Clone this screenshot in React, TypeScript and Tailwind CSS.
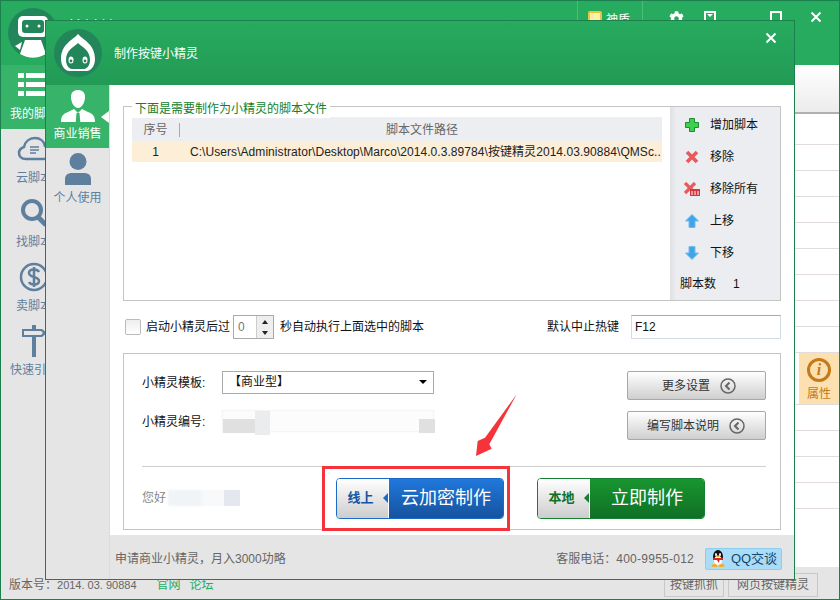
import { FaCog } from "react-icons/fa"

const font = "font-['Liberation_Sans','Noto_Sans_CJK_SC',sans-serif]"
const rowLines = [31, 26, 26, 26, 26, 26, 26, 26, 26, 52, 26, 26, 26, 26]

function RobotLogo() {
  return (
    <svg width="50" height="50" viewBox="0 0 50 50">
      <circle cx="25" cy="25" r="25" fill="#23855a" />
      <rect x="10" y="8" width="30" height="21" rx="5" fill="#fff" />
      <rect x="14" y="12" width="22" height="13" rx="3" fill="#23855a" />
      <circle cx="19" cy="18" r="1.500" fill="#fff" />
      <circle cx="31" cy="18" r="1.500" fill="#fff" />
      <path d="M17 32h16l5 14a25 25 0 0 1-26 0z" fill="#fff" />
      <path d="M7 38l7-4-2 8z" fill="#fff" />
    </svg>
  )
}

function SpriteLogo() {
  return (
    <svg width="48" height="48" viewBox="0 0 48 48">
      <circle cx="24" cy="24" r="24" fill="#23855a" />
      <path d="M24 5C19 11 7 15 7 30c0 8 5 12 8 12h18c3 0 8-4 8-12C41 15 29 11 24 5z" fill="#fff" />
      <path d="M24 14c-4 4-12 7-12 17 0 5 3 9 6 9h12c3 0 6-4 6-9 0-10-8-13-12-17z" fill="#23855a" />
      <ellipse cx="17" cy="31" rx="2.500" ry="3.500" fill="#fff" />
      <ellipse cx="31" cy="31" rx="2.500" ry="3.500" fill="#fff" />
      <circle cx="17" cy="32" r="1.400" fill="#23855a" />
      <circle cx="31" cy="32" r="1.400" fill="#23855a" />
    </svg>
  )
}

function ListIcon() {
  return (
    <svg width="32" height="24" viewBox="0 0 32 24" fill="#fff">
      <rect x="0" y="0" width="6" height="5" />
      <rect x="8" y="0" width="24" height="5" />
      <rect x="0" y="9" width="6" height="5" />
      <rect x="8" y="9" width="24" height="5" />
      <rect x="0" y="18" width="6" height="5" />
      <rect x="8" y="18" width="24" height="5" />
    </svg>
  )
}

function CloudIcon() {
  return (
    <svg width="34" height="26" viewBox="0 0 34 26" fill="none" stroke="#5f7f9f" strokeWidth="2.500">
      <path d="M9 23C4 23 2 20 2 17c0-3 2-5 5-6 1-5 5-9 11-9 5 0 9 3 10 8 3 1 5 3 5 7 0 3-3 6-6 6z" />
      <path d="M13 11h9M13 14h9M13 17h6" strokeWidth="1.500" />
    </svg>
  )
}

function SearchIcon() {
  return (
    <svg width="28" height="30" viewBox="0 0 28 30" fill="none" stroke="#5f7f9f">
      <circle cx="12" cy="12" r="9" strokeWidth="4" />
      <path d="M18 19l8 8" strokeWidth="5" />
    </svg>
  )
}

function DollarIcon() {
  return (
    <svg width="30" height="30" viewBox="0 0 30 30" fill="none" stroke="#5f7f9f">
      <circle cx="15" cy="15" r="13" strokeWidth="2.500" />
      <path d="M20 10c-1-2-3-2.500-5-2.500-3 0-5 1.500-5 3.500 0 5 10 3 10 8 0 2-2 3.500-5 3.500-2 0-4-.5-5-2.500M15 5v20" strokeWidth="2.500" />
    </svg>
  )
}

function SignIcon() {
  return (
    <svg width="26" height="32" viewBox="0 0 26 32" fill="#5f7f9f">
      <rect x="11" y="0" width="4" height="32" />
      <path d="M1 4h20l5 4-5 4H1z" />
      <path d="M3 6h17l2 2-2 2H3z" fill="#e6e6e6" />
    </svg>
  )
}

function SuitPerson() {
  return (
    <svg width="34" height="32" viewBox="0 0 34 32">
      <path d="M10 7c0-5 3-7 7-7s7 2 7 7c0 5-3 11-7 11s-7-6-7-11z" fill="#fff" />
      <path d="M0 32c0-6 2-8 7-10l6-3 4 4 4-4 6 3c5 2 7 4 7 10z" fill="#fff" />
      <path d="M15.500 23h3l.8 9h-4.600z" fill="#38b46a" />
    </svg>
  )
}

function PlainPerson() {
  return (
    <svg width="26" height="32" viewBox="0 0 26 32" fill="#5f7f9f">
      <circle cx="13" cy="8.500" r="8.500" />
      <path d="M0 32v-6c0-4 3-6 7-6h12c4 0 7 2 7 6v6z" />
    </svg>
  )
}

function PlusIcon() {
  return (
    <svg width="14" height="14" viewBox="0 0 14 14">
      <path d="M4.500.5h5v4h4v5h-4v4h-5v-4h-4v-5h4z" fill="#3ed04c" stroke="#1c8a38" />
    </svg>
  )
}

function CrossIcon() {
  return (
    <svg width="14" height="14" viewBox="0 0 14 14">
      <path d="M2 2l10 10M12 2L2 12" stroke="#e8585c" strokeWidth="3.600" />
    </svg>
  )
}

function CrossAllIcon() {
  return (
    <svg width="16" height="14" viewBox="0 0 16 14">
      <path d="M1 1l10 10M11 1L1 11" stroke="#e8585c" strokeWidth="3.200" />
      <rect x="6" y="7" width="10" height="7" fill="#d8343c" />
      <path d="M8 9v4M11 9v4M14 9v4" stroke="#fff" />
    </svg>
  )
}

function UpIcon({ down }: { down?: boolean }) {
  return (
    <svg width="14" height="14" viewBox="0 0 14 14" className={down ? "rotate-180" : ""}>
      <path d="M7 .5l6.500 6.500H10v6.500H4V7H.5z" fill="#3ba6ea" stroke="#7fb8e6" />
    </svg>
  )
}

function BackCircle() {
  return (
    <svg width="16" height="16" viewBox="0 0 16 16" fill="none" stroke="#666">
      <circle cx="8" cy="8" r="7" strokeWidth="1.500" />
      <path d="M9.500 4.500L6 8l3.500 3.500" strokeWidth="2" />
    </svg>
  )
}

function Penguin() {
  return (
    <svg width="16" height="17" viewBox="0 0 16 17">
      <ellipse cx="8" cy="6.500" rx="5" ry="6.500" fill="#111" />
      <ellipse cx="8" cy="10.500" rx="4" ry="5" fill="#fff" />
      <ellipse cx="6" cy="4.500" rx="1" ry="1.500" fill="#fff" />
      <ellipse cx="10" cy="4.500" rx="1" ry="1.500" fill="#fff" />
      <path d="M3 8h10v2H9.500l-.5 3-2-3H3z" fill="#d8261c" />
      <path d="M6 6h4L8 7.500z" fill="#f2b01c" />
      <ellipse cx="4.500" cy="15.500" rx="3" ry="1.500" fill="#f2b01c" />
      <ellipse cx="11.500" cy="15.500" rx="3" ry="1.500" fill="#f2b01c" />
    </svg>
  )
}

function NavItem({ icon, label, active }: { icon: React.ReactNode; label: string; active?: boolean }) {
  return (
    <div className={`flex h-[64px] w-full flex-col items-center pt-[4px] text-[12px] ${active ? "bg-[#38b46a] text-white" : "text-[#5f7f9f]"}`}>
      <div className="flex h-[32px] items-center">{icon}</div>
      <div className="mt-[4px] whitespace-nowrap">{label}</div>
    </div>
  )
}

function SideTool({ icon, label }: { icon: React.ReactNode; label: string }) {
  return (
    <div className="flex h-[32px] items-center">
      <div className="flex w-[38px] justify-center pl-[6px]">{icon}</div>
      <div className="ml-[2px]">{label}</div>
    </div>
  )
}

function GreyButton({ label, pad }: { label: string; pad: string }) {
  return (
    <div className={`flex h-[29px] w-[139px] items-center rounded-[2px] border border-[#a8a8a8] bg-gradient-to-b from-white to-[#cfcfcf] text-[#333] ${pad}`}>
      <span>{label}</span>
      <span className="ml-[10px]"><BackCircle /></span>
    </div>
  )
}

function MakeButton({ tag, label, border, from, to, tagColor, arrow, ml }: { tag: string; label: string; border: string; from: string; to: string; tagColor: string; arrow: string; ml: string }) {
  return (
    <div className={`flex h-[41px] w-[168px] overflow-hidden rounded-[4px] border ${border} ${ml}`}>
      <div className={`relative flex w-[51px] items-center justify-center bg-gradient-to-b from-white to-[#cdcdcd] pr-[4px] text-[13px] font-bold ${tagColor}`}>
        {tag}
        <span className={`absolute right-0 top-[14px] h-0 w-0 border-y-[5px] border-r-[5px] border-y-transparent ${arrow}`} />
      </div>
      <div className={`flex flex-1 items-center justify-center border-l border-white bg-gradient-to-b text-[18px] text-white ${from} ${to}`}>{label}</div>
    </div>
  )
}

export default function App() {
  return (
    <div className={`relative h-[600px] w-[840px] overflow-hidden text-[12px] ${font}`}>
      {/* main window behind the dialog */}
      <div className="flex h-[600px] flex-col border border-[#1b7f4e] bg-[#e5e5e5]">
        <div className="flex h-[64px] bg-[#27ab5f] text-white">
          <div className="ml-[7px] mt-[7px]"><RobotLogo /></div>
          <div className="ml-[10px] mt-[15px] text-[16px]">按键精灵2014</div>
          <div className="ml-auto flex h-[40px]">
            <div className="flex w-[66px] items-start gap-[4px] border-x border-[#4cbc7c] pl-[10px] pt-[10px]">
              <span className="h-[14px] w-[14px] rounded-[2px] border-2 border-[#e8c53a] bg-[#fff2a8]" />
              <span>神盾</span>
            </div>
            <div className="flex items-start pl-[26px] pt-[10px]">
              <FaCog size={15} />
              <span className="ml-[20px] flex h-[13px] w-[12px] justify-center border-[2px] border-white pt-[1px]">
                <span className="h-0 w-0 border-x-[3px] border-t-[3px] border-x-transparent border-t-white" />
              </span>
              <span className="ml-[21px] mt-[10px] h-[2px] w-[11px] bg-white" />
              <span className="ml-[22px] h-[13px] w-[12px] border-[2px] border-white" />
              <svg className="ml-[28px] mr-[17px]" width="12" height="12" viewBox="0 0 12 12" stroke="#fff" strokeWidth="2"><path d="M1.500 1.500l9 9M10.500 1.500l-9 9" /></svg>
            </div>
          </div>
        </div>
        <div className="flex min-h-0 flex-1">
          <div className="flex w-[66px] flex-col items-center">
            <NavItem active icon={<ListIcon />} label="我的脚本" />
            <NavItem icon={<CloudIcon />} label="云脚本" />
            <NavItem icon={<SearchIcon />} label="找脚本" />
            <NavItem icon={<DollarIcon />} label="卖脚本" />
            <NavItem icon={<SignIcon />} label="快速引导" />
          </div>
          <div className="flex flex-1 flex-col bg-white">
            <div className="h-[47px] bg-gradient-to-b from-white to-[#ececec]" />
            <div className="h-[2px] bg-[#b0b0b0]" />
            {rowLines.map((h, i) => (
              <div key={i} style={{ height: h }} className="flex shrink-0 justify-end border-b border-[#e3dcdc]">
                {i === 9 && (
                  <div className="flex h-full w-[40px] flex-col items-center bg-[#fde0b0] pt-[5px] text-[#c47a1a]">
                    <div className="flex h-[24px] w-[24px] items-center justify-center rounded-full border-[3px] border-[#c47a1a] font-['Liberation_Serif',serif] text-[16px] font-bold italic">i</div>
                    <div className="mt-[3px]">属性</div>
                  </div>
                )}
              </div>
            ))}
          </div>
        </div>
        <div className="flex h-[32px] shrink-0 items-center bg-[#e5e5e5] pl-[8px] pt-[3px] text-[#666]">
          <span>版本号：<span className="text-[11px]">2014. 03. 90884</span></span>
          <span className="ml-[20px] text-[#27ab5f]">官网</span>
          <span className="ml-[9px] text-[#27ab5f]">论坛</span>
          <span className="ml-auto flex h-[24px] w-[60px] items-center justify-center border border-[#c8c8c8]">按键抓抓</span>
          <span className="ml-[4px] mr-[21px] flex h-[24px] w-[90px] items-center justify-center border border-[#c8c8c8]">网页按键精灵</span>
        </div>
      </div>

      {/* dialog */}
      <div className="absolute left-[45px] top-[20px] flex h-[560px] w-[750px] flex-col border border-[#1b7f4e] bg-[#e5e5e5]">
        <div className="flex h-[64px] shrink-0 bg-gradient-to-b from-[#27ab5f] to-[#229a55] text-white">
          <div className="ml-[8px] mt-[8px]"><SpriteLogo /></div>
          <div className="ml-[12px] mt-[24px] text-[12px]">制作按键小精灵</div>
          <svg className="ml-auto mr-[17px] mt-[11px]" width="12" height="12" viewBox="0 0 12 12" stroke="#fff" strokeWidth="2"><path d="M1.500 1.500l9 9M10.500 1.500l-9 9" /></svg>
        </div>
        <div className="flex min-h-0 flex-1">
          <div className="flex w-[64px] shrink-0 flex-col border-r border-[#dcdcdc]">
            <div className="relative flex h-[63px] flex-col items-center bg-[#38b46a] pt-[5px] text-white">
              <SuitPerson />
              <div className="mt-[3px] text-[12px]">商业销售</div>
              <span className="absolute right-0 top-[26px] h-0 w-0 border-y-[6px] border-r-[8px] border-y-transparent border-r-white" />
            </div>
            <div className="flex flex-col items-center pt-[5px] text-[#5f7f9f]">
              <PlainPerson />
              <div className="mt-[4px]">个人使用</div>
            </div>
          </div>
          <div className="flex flex-1 flex-col">
            <div className="h-[450px] shrink-0 bg-white px-[13px] pt-[21px] text-[#111]">
              {/* script list box */}
              <div className="relative flex h-[195px] border border-[#c4c4c4]">
                <span className="absolute left-[8px] top-[-7px] bg-white px-[3px] text-[#12802f]">下面是需要制作为小精灵的脚本文件</span>
                <div className="w-[546px] shrink-0 pl-[8px] pr-[8px] pt-[10px]">
                  <div className="flex h-[24px] items-center bg-[#edeef2] pt-[2px] text-[#666]">
                    <span className="w-[47px] text-center">序号</span>
                    <span className="h-[14px] w-px bg-[#aaa]" />
                    <span className="ml-[206px]">脚本文件路径</span>
                  </div>
                  <div className="flex h-[21px] items-center overflow-hidden whitespace-nowrap bg-[#fdeed8] text-[#222]">
                    <span className="w-[47px] shrink-0 text-center">1</span>
                    <span className="ml-[11px] w-[472px] shrink-0 overflow-hidden tracking-[0.06px]">C:\Users\Administrator\Desktop\Marco\2014.0.3.89784\按键精灵2014.03.90884\QMSc..</span>
                  </div>
                </div>
                <div className="flex flex-1 flex-col bg-[linear-gradient(to_right,#dfe0e4,#ecedf1_6px)] pt-[2px]">
                  <SideTool icon={<PlusIcon />} label="增加脚本" />
                  <SideTool icon={<CrossIcon />} label="移除" />
                  <SideTool icon={<CrossAllIcon />} label="移除所有" />
                  <SideTool icon={<UpIcon />} label="上移" />
                  <SideTool icon={<UpIcon down />} label="下移" />
                  <div className="flex h-[30px] items-center pl-[10px]">
                    <span>脚本数</span>
                    <span className="ml-[17px]">1</span>
                  </div>
                </div>
              </div>

              {/* delay and hotkey */}
              <div className="flex h-[52px] items-center">
                <span className="ml-[2px] h-[16px] w-[16px] rounded-[2px] border border-[#bbb] bg-gradient-to-b from-[#eee] to-white" />
                <span className="ml-[5px]">启动小精灵后过</span>
                <div className="ml-[3px] flex h-[24px] w-[41px] border border-[#aaa] pl-[4px] text-[#777]">
                  <span className="flex-1 leading-[22px]">0</span>
                  <div className="flex w-[17px] flex-col items-center justify-around border-l border-[#ccc] bg-[#eee]">
                    <span className="h-0 w-0 border-x-[3px] border-b-[4px] border-x-transparent border-b-[#222]" />
                    <span className="h-0 w-0 border-x-[3px] border-t-[4px] border-x-transparent border-t-[#222]" />
                  </div>
                </div>
                <span className="ml-[6px]">秒自动执行上面选中的脚本</span>
                <span className="ml-auto">默认中止热键</span>
                <div className="ml-[12px] flex h-[24px] w-[150px] items-center border border-[#d4dbe6] border-t-[#aaa] pl-[3px] text-[12px] text-[#111]">F12</div>
              </div>

              {/* template box */}
              <div className="relative flex h-[177px] flex-col border border-[#c4c4c4] pl-[18px] pr-[14px]">
                <div className="flex h-[112px] shrink-0 justify-between pt-[17px]">
                  <div className="flex flex-col gap-[17px]">
                    <div className="flex h-[22px] items-center">
                      <span className="w-[80px] pt-[2px]">小精灵模板:</span>
                      <div className="flex h-[23px] w-[212px] items-center justify-between border border-[#aaa] pl-[6px] pr-[6px]">
                        <span>【商业型】</span>
                        <span className="h-0 w-0 border-x-[4px] border-t-[4px] border-x-transparent border-t-black" />
                      </div>
                    </div>
                    <div className="flex h-[22px] items-center">
                      <span className="w-[80px] pt-[2px]">小精灵编号:</span>
                      <div className="relative h-[22px] w-[212px] border border-[#aaa]">
                        <div className="absolute inset-x-[-2px] inset-y-[-2px] bg-[#fcfcfc] blur-[1px]" />
                        <div className="absolute left-0 top-[8px] h-[14px] w-[32px] bg-[#e0e0e0]" />
                        <div className="absolute left-[32px] top-0 h-[24px] w-[15px] bg-[#ebecee]" />
                        <div className="absolute right-[-2px] top-[8px] h-[14px] w-[16px] bg-[#e0e0e0]" />
                      </div>
                    </div>
                  </div>
                  <div className="flex flex-col gap-[11px]">
                    <GreyButton label="更多设置" pad="pl-[34px]" />
                    <GreyButton label="编写脚本说明" pad="pl-[19px]" />
                  </div>
                </div>
                <div className="h-px shrink-0 bg-[#cfcfcf]" />
                <div className="flex flex-1 items-center">
                  <span className="text-[#888]">您好</span>
                  <div className="ml-[2px] flex h-[16px] w-[72px]">
                    <span className="w-[34px] bg-[#f0f4f7] blur-[1px]" />
                    <span className="w-[22px] bg-[#f7f9fa]" />
                    <span className="w-[16px] bg-[#e3e8ee]" />
                  </div>
                  <MakeButton tag="线上" label="云加密制作" border="border-[#1c6ac8]" from="from-[#2178dc]" to="to-[#15539f]" tagColor="text-[#1553a3]" arrow="border-r-[#1c6ac8]" ml="ml-[96px]" />
                  <MakeButton tag="本地" label="立即制作" border="border-[#158030]" from="from-[#18962f]" to="to-[#107026]" tagColor="text-[#107026]" arrow="border-r-[#158030]" ml="ml-[33px]" />
                </div>
                <div className="absolute left-[198px] top-[112px] h-[65px] w-[188px] border-[3px] border-[#f5333a]" />
                <svg className="absolute left-[350px] top-[38px]" width="46" height="66" viewBox="0 0 46 66">
                  <path d="M42.700 2.300L11 45.700 3.700 49 2 64l15.700-7.300-2.400-4.400z" fill="#f5333a" />
                </svg>
              </div>
            </div>
            <div className="flex flex-1 items-center pl-[5px] pr-[12px] pt-[3px] text-[#666]">
              <span>申请商业小精灵，月入3000功略</span>
              <span className="ml-auto">客服电话：<span className="tracking-[0.25px]">400-9955-012</span></span>
              <div className="ml-[11px] flex h-[22px] w-[77px] items-center justify-center gap-[5px] rounded-[2px] border border-[#8ccdf0] bg-[#abdcf7] text-[13px] text-[#14476e]">
                <Penguin />
                <span>QQ交谈</span>
              </div>
            </div>
          </div>
        </div>
      </div>
    </div>
  )
}
